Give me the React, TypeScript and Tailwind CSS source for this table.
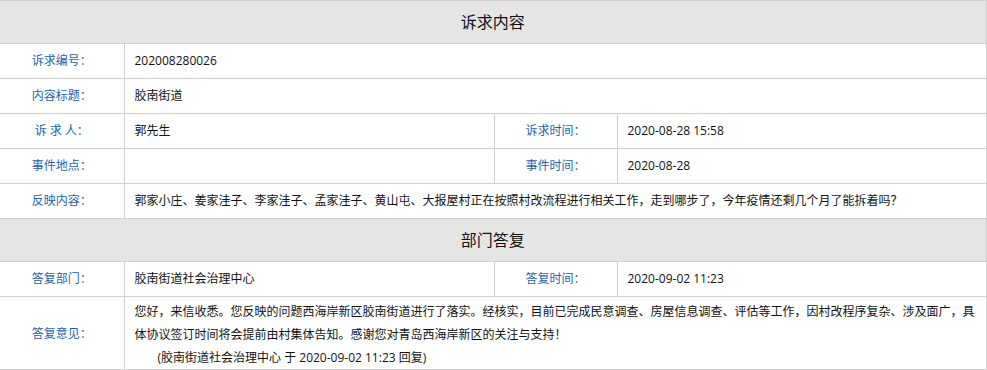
const font = "font-['Open_Sans','Noto_Sans_CJK_SC',sans-serif]";

const label = "h-[35px] border border-[#cfcfcf] text-center text-[12px] text-[#1f5fb3] font-normal";
const value = "h-[35px] border border-[#cfcfcf] px-[10px] text-left text-[12px] text-[#111]";

function Header({ title }: { title: string }) {
  return (
    <tr>
      <th colSpan={4} className="h-[43px] border border-[#cfcfcf] bg-[#e5e5e5] text-center text-[16px] font-normal text-[#111]">
        {title}
      </th>
    </tr>
  );
}

export default function App() {
  return (
    <div className={`w-[987px] h-[370px] bg-white ${font}`}>
      <table className="w-[986px] table-fixed border-collapse border-l-0 [&_tr>*:first-child]:border-l-0 border-r border-r-[#cfd4da]">
        <colgroup>
          <col className="w-[124px]" />
          <col className="w-[370px]" />
          <col className="w-[123px]" />
          <col className="w-[369px]" />
        </colgroup>
        <tbody>
          <Header title="诉求内容" />
          <tr>
            <td className={label}>诉求编号：</td>
            <td className={value} colSpan={3}>202008280026</td>
          </tr>
          <tr>
            <td className={label}>内容标题：</td>
            <td className={value} colSpan={3}>胶南街道</td>
          </tr>
          <tr>
            <td className={label}>诉&nbsp;求&nbsp;人：</td>
            <td className={value}>郭先生</td>
            <td className={label}>诉求时间：</td>
            <td className={value}>2020-08-28 15:58</td>
          </tr>
          <tr>
            <td className={label}>事件地点：</td>
            <td className={value}></td>
            <td className={label}>事件时间：</td>
            <td className={value}>2020-08-28</td>
          </tr>
          <tr>
            <td className={label}>反映内容：</td>
            <td className={value} colSpan={3}>
              郭家小庄、姜家洼子、李家洼子、孟家洼子、黄山屯、大报屋村正在按照村改流程进行相关工作，走到哪步了，今年疫情还剩几个月了能拆着吗？
            </td>
          </tr>
          <Header title="部门答复" />
          <tr>
            <td className={label}>答复部门：</td>
            <td className={value}>胶南街道社会治理中心</td>
            <td className={label}>答复时间：</td>
            <td className={value}>2020-09-02 11:23</td>
          </tr>
          <tr>
            <td className={`${label} h-[72px] pt-[2px]`}>答复意见：</td>
            <td className="border border-[#cfcfcf] px-[10px] pt-[3px] pb-0 text-left text-[12px] leading-[23px] text-[#111]" colSpan={3}>
              <p>
                您好，来信收悉。您反映的问题西海岸新区胶南街道进行了落实。经核实，目前已完成民意调查、房屋信息调查、评估等工作，因村改程序复杂、涉及面广，具体协议签订时间将会提前由村集体告知。感谢您对青岛西海岸新区的关注与支持！
              </p>
              <p className="pl-[23px]">(胶南街道社会治理中心 于 2020-09-02 11:23 回复)</p>
            </td>
          </tr>
        </tbody>
      </table>
    </div>
  );
}
